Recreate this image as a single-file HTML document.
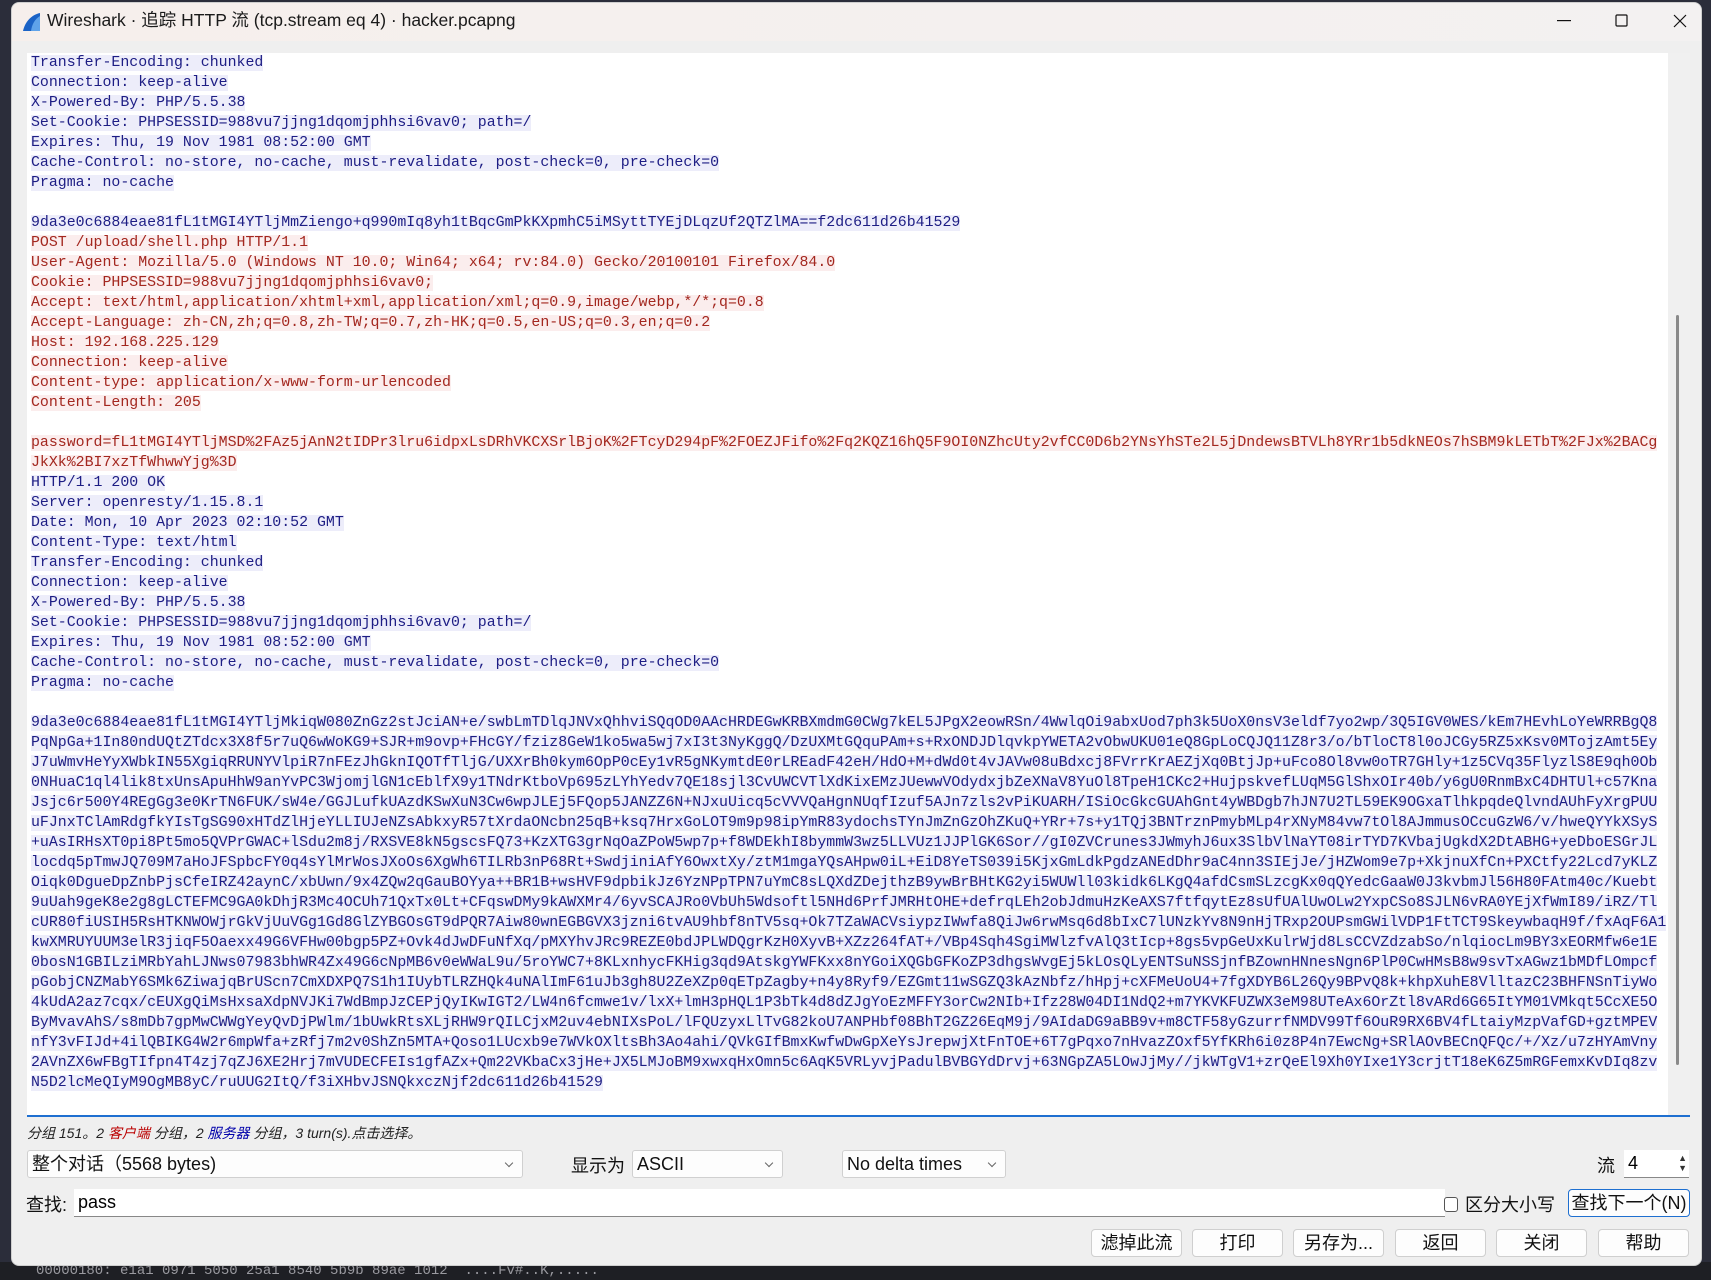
<!DOCTYPE html>
<html><head><meta charset="utf-8"><style>
*{margin:0;padding:0;box-sizing:border-box}
html,body{width:1711px;height:1280px;overflow:hidden;background:#2b2d3a;font-family:"Liberation Sans","Noto Sans CJK SC",sans-serif}
.bot{position:absolute;left:0;top:1262px;width:1711px;height:18px;background:#1e1f24}
.bot span{position:absolute;left:36px;top:1px;font:14px "Liberation Mono",monospace;color:#9a9aa0;white-space:pre}
.win{position:absolute;left:11px;top:2px;width:1691px;height:1264px;background:#efefef;border-radius:8px;overflow:hidden;border:1px solid #cfcfcf}
.title{position:absolute;left:0;top:0;width:100%;height:38px;background:linear-gradient(90deg,#f6efec,#f3f1f1)}
.title .t{position:absolute;left:35px;top:4px;font-size:17.5px;color:#1a1a1a;white-space:nowrap}
.ta{position:absolute;left:15px;top:50px;width:1663px;height:1064px;background:#fff;border-bottom:2px solid #1e6fd0;overflow:hidden}
.sb{position:absolute;left:1641px;top:0;width:22px;height:1062px;background:#f0f0f0}
.sb i{position:absolute;left:8px;top:262px;width:3px;height:750px;background:#8a8a8a;border-radius:2px}
.lines{position:absolute;left:4px;top:0;font:14.9px/20px "Liberation Mono",monospace}
.lines div{height:20px;white-space:pre;line-height:20px}
.c span{background:#fbeded;color:#a3271f}
.s span{background:#ededfa;color:#1d1d84}
.lines div.e span{background:none}
.st{position:absolute;left:15px;top:1120px;font-size:14px;font-style:italic;color:#222}
.cb{position:absolute;height:28px;background:#fdfdfd;border:1px solid #d0d0d0;border-radius:3px;font-size:18px;padding-left:4px;line-height:26px;color:#111}
.cb:after{content:"";position:absolute;right:10px;top:9px;width:5px;height:5px;border-right:1px solid #666;border-bottom:1px solid #666;transform:rotate(45deg)}
.lbl{position:absolute;font-size:18px;color:#111}
.btn{position:absolute;top:1226px;height:28px;width:91px;background:#fdfdfd;border:1px solid #cfcfcf;border-radius:4px;font-size:18px;text-align:center;line-height:26px;color:#111}
</style></head><body>
<div class="bot"><span>00000180: e1a1 0971 5050 25a1 8540 5b9b 89ae 1012  ....Fv#..K,.....</span></div>
<div class="win">
<div class="title">
<svg style="position:absolute;left:9px;top:9px" width="20" height="20" viewBox="0 0 20 20"><path d="M2 19 C4 10 10 3 19 1 L19 19 Z" fill="#1b63c6"/><path d="M10 19 C11 12 14 7 19 4 L19 19Z" fill="#5fa3ea"/></svg>
<div class="t">Wireshark · 追踪 HTTP 流 (tcp.stream eq 4) · hacker.pcapng</div>
<svg style="position:absolute;left:1545px;top:17px" width="14" height="2"><rect width="14" height="1.2" fill="#111"/></svg>
<svg style="position:absolute;left:1603px;top:11px" width="14" height="14"><rect x="1" y="1" width="11" height="11" rx="1" fill="none" stroke="#111" stroke-width="1.2"/></svg>
<svg style="position:absolute;left:1661px;top:11px" width="14" height="14"><path d="M1 1L13 13M13 1L1 13" stroke="#111" stroke-width="1.2"/></svg>
</div>
<div class="ta">
<div class="lines"><div class="s"><span>Transfer-Encoding: chunked</span></div><div class="s"><span>Connection: keep-alive</span></div><div class="s"><span>X-Powered-By: PHP/5.5.38</span></div><div class="s"><span>Set-Cookie: PHPSESSID=988vu7jjng1dqomjphhsi6vav0; path=/</span></div><div class="s"><span>Expires: Thu, 19 Nov 1981 08:52:00 GMT</span></div><div class="s"><span>Cache-Control: no-store, no-cache, must-revalidate, post-check=0, pre-check=0</span></div><div class="s"><span>Pragma: no-cache</span></div><div class="s e"><span> </span></div><div class="s"><span>9da3e0c6884eae81fL1tMGI4YTljMmZiengo+q990mIq8yh1tBqcGmPkKXpmhC5iMSyttTYEjDLqzUf2QTZlMA==f2dc611d26b41529</span></div><div class="c"><span>POST /upload/shell.php HTTP/1.1</span></div><div class="c"><span>User-Agent: Mozilla/5.0 (Windows NT 10.0; Win64; x64; rv:84.0) Gecko/20100101 Firefox/84.0</span></div><div class="c"><span>Cookie: PHPSESSID=988vu7jjng1dqomjphhsi6vav0;</span></div><div class="c"><span>Accept: text/html,application/xhtml+xml,application/xml;q=0.9,image/webp,*/*;q=0.8</span></div><div class="c"><span>Accept-Language: zh-CN,zh;q=0.8,zh-TW;q=0.7,zh-HK;q=0.5,en-US;q=0.3,en;q=0.2</span></div><div class="c"><span>Host: 192.168.225.129</span></div><div class="c"><span>Connection: keep-alive</span></div><div class="c"><span>Content-type: application/x-www-form-urlencoded</span></div><div class="c"><span>Content-Length: 205</span></div><div class="c e"><span> </span></div><div class="c"><span>password=fL1tMGI4YTljMSD%2FAz5jAnN2tIDPr3lru6idpxLsDRhVKCXSrlBjoK%2FTcyD294pF%2FOEZJFifo%2Fq2KQZ16hQ5F9OI0NZhcUty2vfCC0D6b2YNsYhSTe2L5jDndewsBTVLh8YRr1b5dkNEOs7hSBM9kLETbT%2FJx%2BACg</span></div><div class="c"><span>JkXk%2BI7xzTfWhwwYjg%3D</span></div><div class="s"><span>HTTP/1.1 200 OK</span></div><div class="s"><span>Server: openresty/1.15.8.1</span></div><div class="s"><span>Date: Mon, 10 Apr 2023 02:10:52 GMT</span></div><div class="s"><span>Content-Type: text/html</span></div><div class="s"><span>Transfer-Encoding: chunked</span></div><div class="s"><span>Connection: keep-alive</span></div><div class="s"><span>X-Powered-By: PHP/5.5.38</span></div><div class="s"><span>Set-Cookie: PHPSESSID=988vu7jjng1dqomjphhsi6vav0; path=/</span></div><div class="s"><span>Expires: Thu, 19 Nov 1981 08:52:00 GMT</span></div><div class="s"><span>Cache-Control: no-store, no-cache, must-revalidate, post-check=0, pre-check=0</span></div><div class="s"><span>Pragma: no-cache</span></div><div class="s e"><span> </span></div><div class="s"><span>9da3e0c6884eae81fL1tMGI4YTljMkiqW080ZnGz2stJciAN+e/swbLmTDlqJNVxQhhviSQqOD0AAcHRDEGwKRBXmdmG0CWg7kEL5JPgX2eowRSn/4WwlqOi9abxUod7ph3k5UoX0nsV3eldf7yo2wp/3Q5IGV0WES/kEm7HEvhLoYeWRRBgQ8</span></div><div class="s"><span>PqNpGa+1In80ndUQtZTdcx3X8f5r7uQ6wWoKG9+SJR+m9ovp+FHcGY/fziz8GeW1ko5wa5wj7xI3t3NyKggQ/DzUXMtGQquPAm+s+RxONDJDlqvkpYWETA2vObwUKU01eQ8GpLoCQJQ11Z8r3/o/bTloCT8l0oJCGy5RZ5xKsv0MTojzAmt5Ey</span></div><div class="s"><span>J7uWmvHeYyXWbkIN55XgiqRRUNYVlpiR7nFEzJhGknIQOTfTljG/UXXrBh0kym6OpP0cEy1vR5gNKymtdE0rLREadF42eH/HdO+M+dWd0t4vJAVw08uBdxcj8FVrrKrAEZjXq0BtjJp+uFco8Ol8vw0oTR7GHly+1z5CVq35FlyzlS8E9qh0Ob</span></div><div class="s"><span>0NHuaC1ql4lik8txUnsApuHhW9anYvPC3WjomjlGN1cEblfX9y1TNdrKtboVp695zLYhYedv7QE18sjl3CvUWCVTlXdKixEMzJUewwVOdydxjbZeXNaV8YuOl8TpeH1CKc2+HujpskvefLUqM5GlShxOIr40b/y6gU0RnmBxC4DHTUl+c57Kna</span></div><div class="s"><span>Jsjc6r500Y4REgGg3e0KrTN6FUK/sW4e/GGJLufkUAzdKSwXuN3Cw6wpJLEj5FQop5JANZZ6N+NJxuUicq5cVVVQaHgnNUqfIzuf5AJn7zls2vPiKUARH/ISiOcGkcGUAhGnt4yWBDgb7hJN7U2TL59EK9OGxaTlhkpqdeQlvndAUhFyXrgPUU</span></div><div class="s"><span>uFJnxTClAmRdgfkYIsTgSG90xHTdZlHjeYLLIUJeNZsAbkxyR57tXrdaONcbn25qB+ksq7HrxGoLOT9m9p98ipYmR83ydochsTYnJmZnGzOhZKuQ+YRr+7s+y1TQj3BNTrznPmybMLp4rXNyM84vw7tOl8AJmmusOCcuGzW6/v/hweQYYkXSyS</span></div><div class="s"><span>+uAsIRHsXT0pi8Pt5mo5QVPrGWAC+lSdu2m8j/RXSVE8kN5gscsFQ73+KzXTG3grNqOaZPoW5wp7p+f8WDEkhI8bymmW3wz5LLVUz1JJPlGK6Sor//gI0ZVCrunes3JWmyhJ6ux3SlbVlNaYT08irTYD7KVbajUgkdX2DtABHG+yeDboESGrJL</span></div><div class="s"><span>locdq5pTmwJQ709M7aHoJFSpbcFY0q4sYlMrWosJXoOs6XgWh6TILRb3nP68Rt+SwdjiniAfY6OwxtXy/ztM1mgaYQsAHpw0iL+EiD8YeTS039i5KjxGmLdkPgdzANEdDhr9aC4nn3SIEjJe/jHZWom9e7p+XkjnuXfCn+PXCtfy22Lcd7yKLZ</span></div><div class="s"><span>Oiqk0DgueDpZnbPjsCfeIRZ42aynC/xbUwn/9x4ZQw2qGauBOYya++BR1B+wsHVF9dpbikJz6YzNPpTPN7uYmC8sLQXdZDejthzB9ywBrBHtKG2yi5WUWll03kidk6LKgQ4afdCsmSLzcgKx0qQYedcGaaW0J3kvbmJl56H80FAtm40c/Kuebt</span></div><div class="s"><span>9uUah9geK8e2g8gLCTEFMC9GA0kDhjR3Mc4OCUh71QxTx0Lt+CFqswDMy9kAWXMr4/6yvSCAJRo0VbUh5Wdsoftl5NHd6PrfJMRHtOHE+defrqLEh2obJdmuHzKeAXS7ftfqytEz8sUfUAlUwOLw2YxpCSo8SJLN6vRA0YEjXfWmI89/iRZ/Tl</span></div><div class="s"><span>cUR80fiUSIH5RsHTKNWOWjrGkVjUuVGg1Gd8GlZYBGOsGT9dPQR7Aiw80wnEGBGVX3jzni6tvAU9hbf8nTV5sq+Ok7TZaWACVsiypzIWwfa8QiJw6rwMsq6d8bIxC7lUNzkYv8N9nHjTRxp2OUPsmGWilVDP1FtTCT9SkeywbaqH9f/fxAqF6A1</span></div><div class="s"><span>kwXMRUYUUM3elR3jiqF5Oaexx49G6VFHw00bgp5PZ+Ovk4dJwDFuNfXq/pMXYhvJRc9REZE0bdJPLWDQgrKzH0XyvB+XZz264fAT+/VBp4Sqh4SgiMWlzfvAlQ3tIcp+8gs5vpGeUxKulrWjd8LsCCVZdzabSo/nlqiocLm9BY3xEORMfw6e1E</span></div><div class="s"><span>0bosN1GBILziMRbYahLJNws07983bhWR4Zx49G6cNpMB6v0eWWaL9u/5roYWC7+8KLxnhycFKHig3qd9AtskgYWFKxx8nYGoiXQGbGFKoZP3dhgsWvgEj5kLOsQLyENTSuNSSjnfBZownHNnesNgn6PlP0CwHMsB8w9svTxAGwz1bMDfLOmpcf</span></div><div class="s"><span>pGobjCNZMabY6SMk6ZiwajqBrUScn7CmXDXPQ7S1h1IUybTLRZHQk4uNAlImF61uJb3gh8U2ZeXZp0qETpZagby+n4y8Ryf9/EZGmt11wSGZQ3kAzNbfz/hHpj+cXFMeUoU4+7fgXDYB6L26Qy9BPvQ8k+khpXuhE8VlltazC23BHFNSnTiyWo</span></div><div class="s"><span>4kUdA2az7cqx/cEUXgQiMsHxsaXdpNVJKi7WdBmpJzCEPjQyIKwIGT2/LW4n6fcmwe1v/lxX+lmH3pHQL1P3bTk4d8dZJgYoEzMFFY3orCw2NIb+Ifz28W04DI1NdQ2+m7YKVKFUZWX3eM98UTeAx6OrZtl8vARd6G65ItYM01VMkqt5CcXE5O</span></div><div class="s"><span>ByMvavAhS/s8mDb7gpMwCWWgYeyQvDjPWlm/1bUwkRtsXLjRHW9rQILCjxM2uv4ebNIXsPoL/lFQUzyxLlTvG82koU7ANPHbf08BhT2GZ26EqM9j/9AIdaDG9aBB9v+m8CTF58yGzurrfNMDV99Tf6OuR9RX6BV4fLtaiyMzpVafGD+gztMPEV</span></div><div class="s"><span>nfY3vFIJd+4ilQBIKG4W2r6mpWfa+zRfj7m2v0ShZn5MTA+Qoso1LUcxb9e7WVkOXltsBh3Ao4ahi/QVkGIfBmxKwfwDwGpXeYsJrepwjXtFnTOE+6T7gPqxo7nHvazZOxf5YfKRh6i0z8P4n7EwcNg+SRlAOvBECnQFQc/+/Xz/u7zHYAmVny</span></div><div class="s"><span>2AVnZX6wFBgTIfpn4T4zj7qZJ6XE2Hrj7mVUDECFEIs1gfAZx+Qm22VKbaCx3jHe+JX5LMJoBM9xwxqHxOmn5c6AqK5VRLyvjPadulBVBGYdDrvj+63NGpZA5LOwJjMy//jkWTgV1+zrQeEl9Xh0YIxe1Y3crjtT18eK6Z5mRGFemxKvDIq8zv</span></div><div class="s"><span>N5D2lcMeQIyM9OgMB8yC/ruUUG2ItQ/f3iXHbvJSNQkxczNjf2dc611d26b41529</span></div></div>
<div class="sb"><i></i></div>
</div>
<div class="st">分组 151。2 <span style="color:#b00">客户端</span> 分组，2 <span style="color:#00a">服务器</span> 分组，3 turn(s).点击选择。</div>
<div class="cb" style="left:15px;top:1147px;width:496px">整个对话（5568 bytes)</div>
<div class="lbl" style="left:559px;top:1149px">显示为</div>
<div class="cb" style="left:620px;top:1147px;width:151px">ASCII</div>
<div class="cb" style="left:830px;top:1147px;width:164px">No delta times</div>
<div class="lbl" style="left:1585px;top:1149px">流</div>
<div style="position:absolute;left:1612px;top:1147px;width:65px;height:28px;background:#fff;border-bottom:1px solid #888;font-size:18px;line-height:27px;padding-left:4px">4<span style="position:absolute;right:2px;top:3px;font-size:9px;line-height:10px;color:#333">▲<br>▼</span></div>
<div class="lbl" style="left:14px;top:1188px">查找:</div>
<div style="position:absolute;left:62px;top:1186px;width:1371px;height:28px;background:#fff;border-bottom:1px solid #888;font-size:18px;line-height:27px;padding-left:4px">pass</div>
<div style="position:absolute;left:1432px;top:1194px;width:14px;height:15px;border:1px solid #555;border-radius:3px;background:#fff"></div>
<div class="lbl" style="left:1453px;top:1188px">区分大小写</div>
<div class="btn" style="left:1556px;top:1186px;width:122px;border:1px solid #1e6fd0">查找下一个(N)</div>
<div class="btn" style="left:1079px">滤掉此流</div>
<div class="btn" style="left:1180px">打印</div>
<div class="btn" style="left:1281px">另存为...</div>
<div class="btn" style="left:1383px">返回</div>
<div class="btn" style="left:1484px">关闭</div>
<div class="btn" style="left:1586px">帮助</div>
</div>
</body></html>
